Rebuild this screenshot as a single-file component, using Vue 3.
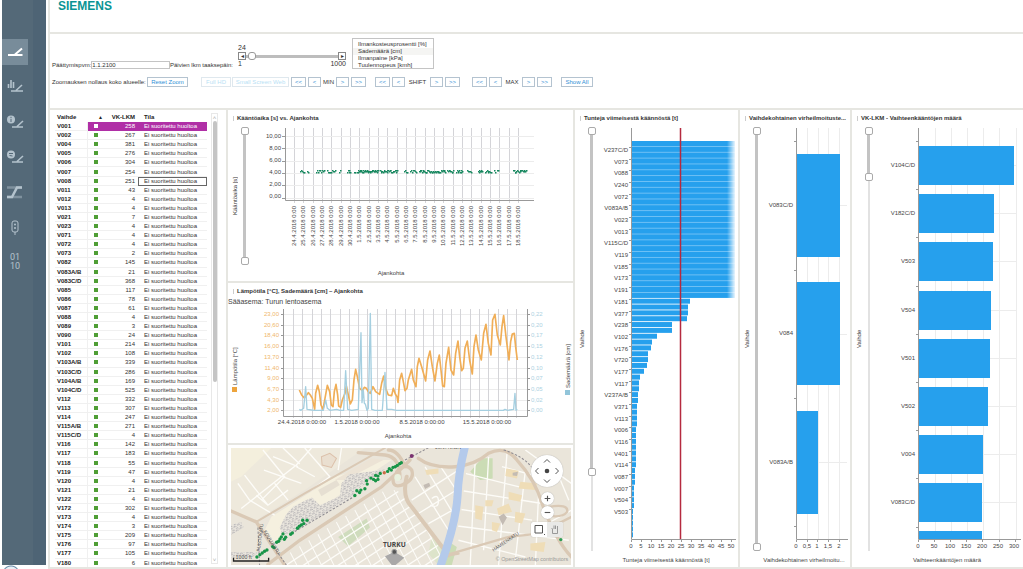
<script setup>
import { ref } from 'vue'

const rows = `V001 258|V002 267|V004 381|V005 276|V006 304|V007 254|V008 251|V011 43|V012 4|V013 4|V021 7|V023 4|V071 4|V072 4|V073 2|V082 145|V083A/B 21|V083C/D 368|V085 117|V086 78|V087 61|V088 4|V089 3|V090 24|V101 214|V102 108|V103A/B 339|V103C/D 286|V104A/B 169|V104C/D 525|V112 332|V113 307|V114 247|V115A/B 271|V115C/D 4|V116 142|V117 183|V118 55|V119 47|V120 4|V121 21|V122 4|V172 302|V173 4|V174 3|V175 209|V176 97|V177 105|V180 6`
  .split('|')
  .map((r) => {
    const [name, count] = r.split(' ')
    return { name, count }
  })

const endDate = ref('1.1.2100')
const days = ref(24)
const weather = ['Ilmankosteusprosentti [%]', 'Sademäärä [cm]', 'Ilmanpaine [kPa]', 'Tuulennopeus [kmh]']
const shifts = [
  { name: 'MIN', cls: 'min' },
  { name: 'SHIFT', cls: 'shift' },
  { name: 'MAX', cls: 'max' }
]

const dates = Array.from({ length: 25 }, (_, i) => (i < 7 ? `${24 + i}.4.2018 0:00` : `${i - 6}.5.2018 0:00`))
const turnTicks = ['10,00', '8,00', '6,00', '4,00', '2,00', '0,00']

let seed = 7
const rand = () => {
  seed = (seed * 1103515245 + 12345) % 2147483648
  return seed / 2147483648
}
const clusters = [[300, 304, 5], [307, 308, 2], [316, 324, 9], [327, 335, 9], [339, 340, 2], [347, 350, 5], [354, 355, 2], [357, 378, 34], [380, 397, 24], [404, 407, 4], [410, 416, 7], [419, 445, 36], [447, 453, 9], [456, 462, 9], [467, 471, 5], [478, 482, 7], [485, 491, 8], [494, 498, 4], [513, 526, 17]]
const dots = clusters.flatMap(([a, b, n]) =>
  Array.from({ length: n }, (_, i) => ({
    x: Math.round(a + ((b - a) * i) / (n - 1)),
    y: 171 + Math.round((rand() - 0.5) * 3)
  }))
)

const tempTicks = ['23,00', '20,60', '18,40', '16,00', '13,70', '11,40', '9,00', '6,70', '4,30', '2,00']
const rainTicks = ['0,22', '0,20', '0,17', '0,15', '0,12', '0,10', '0,07', '0,05', '0,02', '0,00']
const weekTicks = [
  { x: 302, t: '24.4.2018 0:00:00' },
  { x: 357, t: '1.5.2018 0:00:00' },
  { x: 422, t: '8.5.2018 0:00:00' },
  { x: 487, t: '15.5.2018 0:00:00' }
]
const tempLine = '223,330 230,345 238,354 250,338 256,345 262,355 269,388 272,340 278,316 283,335 288,375 294,388 300,355 307,316 314,335 319,375 324,380 328,335 333,313 338,345 341,378 347,382 352,360 360,340 364,318 370,345 376,372 382,360 387,300 392,268 397,290 404,325 412,332 418,322 424,325 430,335 436,340 444,320 452,335 464,343 470,310 476,288 482,325 490,345 500,347 505,325 511,342 516,350 519,367 524,300 530,280 536,310 540,332 546,325 550,300 560,268 565,300 573,320 577,260 582,235 590,260 602,303 608,240 615,213 622,260 630,303 637,250 643,225 648,270 653,318 658,320 663,250 671,202 678,270 686,285 692,220 699,183 704,230 710,272 715,265 720,205 727,183 734,240 742,282 747,200 753,165 760,210 769,240 776,160 783,133 790,190 798,225 803,120 810,103 817,165 826,195 831,140 836,107 843,170 852,240 857,185 862,162 868,160 872,200 877,240'
const rainLine = '223,388 228,391 236,385 242,320 246,388 260,390 270,391 295,391 302,360 307,385 315,391 335,388 345,391 356,391 362,272 368,388 380,391 400,388 408,158 411,368 415,330 418,370 421,372 426,391 430,385 436,100 440,388 450,391 472,391 480,277 486,388 500,388 515,391 560,391 835,391 840,388 848,391 866,388 870,340 873,391 877,388'

const hourLabels = 'V237C/D V073 V088 V240 V072 V083A/B V023 V013 V115C/D V119 V185 V173 V191 V181 V377 V238 V102 V176 V720 V177 V117 V237A/B V371 V113 V006 V116 V401 V114 V087 V007 V504 V503'.split(' ')
const hourBars = [
  ...Array(27).fill(103),
  58, 56, 56, 55, 40, 40, 25, 20, 19, 16, 16, 15, 12, 8, 7, 7, 6, 6, 5, 5, 5, 5, 4, 4, 4, 4, 4, 4, 4, 3, 3, 3, 2, 2, 2, 2, 1, 1, 1, 1, 1
]
const hourPitch = 5.84

const errorBars = [
  { name: 'V083C/D', y: 154, w: 43 },
  { name: 'V084', y: 282, w: 43 },
  { name: 'V083A/B', y: 411, w: 21 }
]
const errorTicks = ['0', '0,5', '1', '1,5', '2']

const countBars = [['V104C/D', 95], ['V182C/D', 75], ['V503', 74], ['V504', 72], ['V501', 71], ['V502', 69], ['V004', 64], ['V083C/D', 63]]
const countPitch = 48.2

const mapDots = [[97, 350], [106, 343], [113, 338], [120, 333], [127, 329], [144, 319], [148, 322], [156, 306], [162, 303], [166, 296], [170, 290], [175, 281], [179, 297], [183, 291], [198, 282], [203, 278], [218, 264], [224, 258], [230, 254], [234, 240], [237, 250], [247, 240], [390, 166], [396, 152], [404, 157], [408, 150], [420, 146], [425, 122], [427, 132], [438, 114], [446, 118], [452, 122], [459, 118], [459, 108], [452, 106], [466, 100], [488, 94], [493, 86], [499, 90], [504, 82], [511, 80], [517, 76], [524, 71], [529, 68]]
const range = (n) => Array.from({ length: n }, (_, i) => i)

const zoomSliders = {
  turn: { a: 0, b: 100 },
  hours: { a: 0, b: 82 },
  errors: { a: 0, b: 100 },
  counts: { a: 0, b: 11 }
}
</script>

<template>
  <div class="page">
    <nav class="side" aria-label="Päävalikko">
      <div class="rail">
        <a href="#" class="item active" aria-label="Vaihteet">
          <svg viewBox="0 0 26 26"><path d="M6 16H20.500M13 15.500L20 9.500" stroke-width="2" /></svg>
        </a>
        <a href="#" class="item" aria-label="Tilastot">
          <svg viewBox="0 0 26 26">
            <path d="M6.500 10V14M9 6V14M11.500 8V14" stroke-width="1.600" />
            <path d="M9 17H21M14 16.500L20 11" stroke-width="1.600" />
          </svg>
        </a>
        <a href="#" class="item" aria-label="Tiedot">
          <svg viewBox="0 0 26 26">
            <circle cx="9" cy="10.500" r="4" class="fill" />
            <path d="M9 9.800V13M9 7.800V9" class="dark" />
            <path d="M10 18H21M15 17.500L21 12" stroke-width="1.600" />
          </svg>
        </a>
        <a href="#" class="item" aria-label="Asetukset">
          <svg viewBox="0 0 26 26">
            <circle cx="9" cy="10.500" r="4" class="fill" />
            <path d="M7 9.500H11M7.500 11.500L10.500 12" class="dark" />
            <path d="M10 18H21M15 17.500L21 12" stroke-width="1.600" />
          </svg>
        </a>
        <a href="#" class="item" aria-label="Raiteet">
          <svg viewBox="0 0 26 26">
            <path d="M5 8.500H20M5 18H20" stroke-width="2.500" opacity=".45" />
            <path d="M5 18H10L15 8.500H20" stroke-width="2.500" />
          </svg>
        </a>
        <a href="#" class="item" aria-label="Opastimet">
          <svg viewBox="0 0 26 26">
            <rect x="10" y="7" width="6" height="11" rx="2" stroke-width="1" />
            <circle cx="13" cy="10.500" r="1" class="fill" /><circle cx="13" cy="14" r="1" class="fill" />
            <path d="M13 18V21" stroke-width="1" />
          </svg>
        </a>
        <a href="#" class="item digits" aria-label="Data">01<br />10</a>
      </div>
      <span class="orb"></span>
    </nav>

    <div class="main">
      <header class="brand"><span class="logo">SIEMENS</span></header>

      <section class="tools">
        <div class="line first">
          <label class="date">Päättymispvm:<input v-model="endDate" type="text" /></label>
          <label class="days" for="days">Päivien lkm taaksepäin:</label>
          <div class="stepper">
            <span>{{ days }}</span>
            <div class="track">
              <button type="button" aria-label="Vähennä">◂</button>
              <input id="days" v-model="days" type="range" min="1" max="1000" />
              <button type="button" aria-label="Lisää">▸</button>
            </div>
            <div class="ends"><span>1</span><span>1000</span></div>
          </div>
          <select class="weather" multiple size="4" aria-label="Sääsuure">
            <option v-for="w in weather" :key="w" :class="{ chosen: w === weather[1] }">{{ w }}</option>
          </select>
        </div>
        <div class="line second">
          <span class="zoom-label">Zoomauksen nollaus koko alueelle:</span>
          <button type="button" class="reset">Reset Zoom</button>
          <button type="button" class="hd" disabled>Full HD</button>
          <button type="button" class="small" disabled>Small Screen Web</button>
          <div v-for="s in shifts" :key="s.name" class="shifter" :class="s.cls">
            <button type="button" class="dbl">&lt;&lt;</button>
            <button type="button" class="sgl">&lt;</button>
            <span>{{ s.name }}</span>
            <button type="button" class="sgl">&gt;</button>
            <button type="button" class="dbl">&gt;&gt;</button>
          </div>
          <button type="button" class="all">Show All</button>
        </div>
      </section>

      <div class="board">
        <section class="panel list">
          <table>
            <colgroup><col class="c1" /><col class="c2" /><col class="c3" /><col /></colgroup>
            <thead>
              <tr><th>Vaihde</th><th class="sort">▲</th><th class="num">VK-LKM</th><th class="state">Tila</th></tr>
            </thead>
            <tbody>
              <tr v-for="(r, i) in rows" :key="r.name" :class="{ picked: i === 0, focused: i === 6 }">
                <th>{{ r.name }}</th>
                <td><i class="dot"></i></td>
                <td class="num">{{ r.count }}</td>
                <td class="state">Ei suoritettu huoltoa</td>
              </tr>
            </tbody>
          </table>
          <div class="scroll"><span class="cap">˄</span><span class="thumb"></span><span class="rest"></span><span class="cap">˅</span></div>
        </section>

        <section class="panel plot turn">
          <h2><i></i>Kääntöaika [s] vs. Ajankohta</h2>
          <span class="ylabel">Kääntöaika [s]</span>
          <div class="zoomer" :style="{ '--a': zoomSliders.turn.a + '%', '--b': zoomSliders.turn.b + '%' }">
            <input v-model="zoomSliders.turn.a" type="range" aria-label="Kääntöaika alku" />
            <input v-model="zoomSliders.turn.b" type="range" aria-label="Kääntöaika loppu" />
          </div>
          <svg viewBox="249 123 324 158">
            <g class="vgrid"><path v-for="i in range(25)" :key="i" :d="`M${Math.round(294 + (i * 28) / 3)}.5 128V203`" /></g>
            <g class="hgrid"><path v-for="i in range(6)" :key="i" :d="`M283 ${136 + Math.round(i * 12.3)}.5H534`" /></g>
            <path class="axis" d="M285.500 128V200.500H534" />
            <g class="ticks">
              <path v-for="i in range(6)" :key="i" :d="`M282 ${136 + Math.round(i * 12.3)}.5H285`" />
              <text v-for="(t, i) in turnTicks" :key="t" x="281" :y="138 + i * 12" text-anchor="end">{{ t }}</text>
              <text v-for="(d, i) in dates" :key="d" text-anchor="end" :transform="`translate(${Math.round(296 + (i * 28) / 3)} 206) rotate(-90)`">{{ d }}</text>
              <text x="391" y="275" text-anchor="middle">Ajankohta</text>
            </g>
            <rect v-for="(d, i) in dots" :key="i" :x="d.x" :y="d.y" width="1.500" height="1.500" fill="#16875f" />
          </svg>
        </section>

        <section class="panel plot weatherplot">
          <h2><i></i>Lämpötila [°C], Sademäärä [cm] – Ajankohta</h2>
          <svg viewBox="228 296 345 147">
            <text x="228" y="304" class="station">Sääasema: Turun lentoasema</text>
            <g class="hgrid"><path v-for="i in range(10)" :key="i" :d="`M284 ${Math.round(314 + i * 10.7)}.5H527`" /></g>
            <g class="vgrid"><path v-for="i in range(25)" :key="i" :d="`M${Math.round(293 + i * 9.3)}.5 309V418`" /></g>
            <path class="axis" d="M283.500 309V416.500H527.500V309" />
            <g v-for="(t, i) in tempTicks" :key="t">
              <path class="axis" :d="`M281 ${Math.round(314 + i * 10.7)}.5H283M528 ${Math.round(314 + i * 10.7)}.5H530`" />
              <text x="279" :y="Math.round(316 + i * 10.7)" text-anchor="end" fill="#efb66c">{{ t }}</text>
              <text x="531" :y="Math.round(316 + i * 10.7)" fill="#add2e2">{{ rainTicks[i] }}</text>
            </g>
            <g transform="translate(225 280) scale(.3333)" fill="none" stroke-width="4" stroke-linejoin="round">
              <polyline :points="tempLine" stroke="#f0ae57" stroke-width="5" />
              <polyline :points="rainLine" stroke="#a5cfe0" />
            </g>
            <text v-for="w in weekTicks" :key="w.t" :x="w.x" y="424" text-anchor="middle">{{ w.t }}</text>
            <text x="398" y="438" text-anchor="middle">Ajankohta</text>
            <rect x="232" y="387" width="5" height="5" fill="#eda43d" />
            <text transform="translate(237 385) rotate(-90)">Lämpötila [°C]</text>
            <rect x="565" y="390" width="5" height="5" fill="#92c5da" />
            <text transform="translate(570 388) rotate(-90)">Sademäärä [cm]</text>
          </svg>
        </section>

        <section class="panel map">
          <svg viewBox="18 24 1020 350" preserveAspectRatio="xMidYMid slice">
            <defs>
              <pattern id="yard" width="13" height="13" patternUnits="userSpaceOnUse" patternTransform="rotate(-32)">
                <rect width="13" height="13" fill="#e9e5dd" />
                <path d="M1 3q5 -3 9 1M6 10q4 -2 7 1" fill="none" stroke="#a3a2a8" stroke-width="2.500" />
              </pattern>
              <clipPath id="town"><path d="M140 374L480 150L530 130L545 190L660 345L650 374Z" /></clipPath>
              <clipPath id="mid"><path d="M545 120L600 72L700 85L685 230L655 330L545 180Z" /></clipPath>
              <clipPath id="east"><path d="M724 85L830 30L1038 30V374H660L705 240Z" /></clipPath>
            </defs>
            <rect x="18" y="24" width="1020" height="350" fill="#eae5da" />
            <path d="M18 24H420L240 150L110 230L95 245L18 212Z" fill="#eee9dc" />
            <path d="M18 24H140L50 110L18 125Z" fill="#f4efdd" />
            <path d="M140 230L330 110L400 90L440 60L500 60L350 160L180 280L150 310L120 270Z" fill="#f5f0df" />
            <path d="M330 120L440 55L475 60L360 120Z" fill="#ece3d5" />
            <path d="M290 50L315 40L335 55L320 82L292 75Z" fill="#eadfd0" stroke="#dcc1ab" stroke-width="3" />
            <path d="M280 150L335 120L345 135L290 168Z" fill="#e6dfd2" />
            <path d="M340 290L425 235L435 262L370 318Z" fill="#cfdcbd" />
            <path d="M770 55H802V115L765 120L735 95Z" fill="#cbdcb5" />
            <path d="M672 305L695 320L680 374H640Z" fill="#cbdcb5" />
            <path d="M620 290L655 330L640 374L610 340Z" fill="#dde4ca" />

            <g stroke="#fdfcf8" stroke-width="4" fill="none">
              <path d="M50 205L215 75L260 24M115 30L180 110L110 180M75 180L150 225M145 50L220 80M95 165L130 195M215 80L270 110M175 24L225 72M60 105L130 195L190 150M40 130L75 180M240 24L315 110L260 150M350 24L340 90M150 130L190 180M118 90L230 130" />
              <g clip-path="url(#town)">
                <path v-for="i in range(9)" :key="'a' + i" :d="`M${100 + i * 52} 430L${520 + i * 52} 154`" />
                <path v-for="i in range(17)" :key="'b' + i" :d="`M${100 + i * 37} ${150}L${240 + i * 37} 420`" stroke-width="3" />
              </g>
              <g clip-path="url(#mid)">
                <path d="M560 180L700 90M580 220L710 140M610 250L700 200M600 80L690 230M570 110L670 270M640 70L700 160M620 175q20 -15 20 8t-25 12" />
              </g>
              <g clip-path="url(#east)">
                <path d="M700 150L950 190M690 205L920 240M680 255L1030 300M720 100L900 145M750 60L735 374M790 50L775 330M845 40L820 374M900 90L870 360M940 150L930 374M980 60L1030 180M900 30L1038 130M985 60L940 130M1038 210L930 270M700 300L900 350M830 80L940 110" />
              </g>
            </g>
            <g fill="#efddb7">
              <path d="M843 85L880 92L875 115L840 108ZM885 125L935 130L930 150L880 145ZM850 155L890 165L885 185L850 178ZM815 205L850 190L860 215L820 225ZM870 215L900 220L890 250L868 245ZM750 195L775 200L770 240L750 235ZM800 245L825 250L815 275L800 270ZM915 310L960 305L955 335L915 330ZM780 180L805 180L800 198L780 198ZM600 90L640 85L640 100L605 105Z" />
            </g>
            <path d="M820 230L835 220L845 232L832 255ZM595 135L612 128L616 138L600 147ZM862 98L878 95L875 108L862 106Z" fill="#c3bbb3" />

            <g fill="none" stroke="#dac9b5" stroke-width="10" stroke-linecap="round">
              <path d="M130 372L225 300L470 140L530 85L555 60" />
              <path d="M18 212L95 245L180 374" />
              <path d="M95 245L240 160L480 24" stroke-width="6" />
              <path d="M545 110Q530 170 560 200L670 345" stroke-width="12" />
              <path d="M580 55Q620 85 690 80Q750 75 790 40Q840 15 875 60Q930 120 950 190Q990 300 1038 350" />
              <path d="M400 38L480 45Q525 50 525 115M490 30Q520 30 540 80M505 110Q500 145 530 135Q570 120 560 90Q540 65 515 95" />
              <path d="M660 345L850 290L940 280L1038 230M970 200Q1030 190 1025 215Q1010 235 960 225M670 345L700 340" stroke-width="7" />
            </g>
            <path d="M722 10Q700 90 697 170Q692 250 645 380" fill="none" stroke="#b4caeb" stroke-width="24" />
            <circle cx="518" cy="112" r="10" fill="#e8f1de" />

            <path d="M350 130L372 103L480 88L440 118L395 150L380 172L200 280L172 282L165 262L185 222L205 200L240 182L262 172L285 195L345 168Z" fill="url(#yard)" />
            <path d="M18 255L50 245L58 262L18 285ZM18 335L100 335L85 350L18 352Z" fill="url(#yard)" />
            <g fill="none" stroke="#8d8a90" stroke-width="3" stroke-dasharray="7 5">
              <path d="M540 60L620 18M835 30Q900 50 925 90M100 262L105 374M105 262L140 310L185 374M200 280L390 168" />
            </g>
            <circle v-for="(d, i) in mapDots" :key="i" :cx="d[0]" :cy="d[1]" r="5" fill="#189447" />
            <circle cx="478" cy="98" r="5" fill="#cb6b45" />
            <circle cx="560" cy="48" r="6" fill="#7b3270" />
            <circle cx="1006" cy="298" r="5" fill="#2f9c53" />

            <path d="M480 348L508 334L538 352L512 374H500Z" fill="#a9a8a8" />
            <circle cx="508" cy="335" r="7" fill="#555" stroke="#999" stroke-width="3" />
            <g class="streets">
              <text x="508" y="321" text-anchor="middle" class="city">TURKU</text>
              <text x="630" y="28">LÖNTTINEN</text>
              <text transform="translate(805 334) rotate(-34)">HÄMEENKATU</text>
              <text transform="translate(106 334) rotate(-83)">PUISTOKATU</text>
              <text transform="translate(116 274) rotate(58)">KOULUKATU</text>
              <text x="33" y="357" class="scale">1000 ft</text>
              <text x="1028" y="361" text-anchor="end" class="credit">© OpenStreetMap contributors</text>
            </g>
            <path d="M27 352V362H132V352" fill="none" stroke="#222" stroke-width="4" />
          </svg>
          <div class="mapctl">
            <div class="pan">
              <button type="button" class="n" aria-label="Pohjoinen"><svg viewBox="0 0 8 8"><path d="M1 5.500L4 2.500L7 5.500" /></svg></button>
              <button type="button" class="w" aria-label="Länsi"><svg viewBox="0 0 8 8"><path d="M5.500 1L2.500 4L5.500 7" /></svg></button>
              <button type="button" class="o" aria-label="Keskitä"><svg viewBox="0 0 8 8"><circle cx="4" cy="4" r="2.300" /></svg></button>
              <button type="button" class="e" aria-label="Itä"><svg viewBox="0 0 8 8"><path d="M2.500 1L5.500 4L2.500 7" /></svg></button>
              <button type="button" class="s" aria-label="Etelä"><svg viewBox="0 0 8 8"><path d="M1 2.500L4 5.500L7 2.500" /></svg></button>
            </div>
            <button type="button" class="round" aria-label="Lähennä"><svg viewBox="0 0 8 8"><path d="M1.500 4H6.500M4 1.500V6.500" /></svg></button>
            <button type="button" class="round" aria-label="Loitonna"><svg viewBox="0 0 8 8"><path d="M1.500 4H6.500" /></svg></button>
            <div class="modes">
              <button type="button" aria-label="Valinta"><svg viewBox="0 0 16 15"><path d="M4 3.500H11.500V11H4ZM13 12.500H14" /></svg></button>
              <button type="button" class="hand" aria-label="Siirto"><svg viewBox="0 0 16 15"><path d="M5.500 7V11.500H10.500V5.500M5.500 7L4.500 6M7 7V3.500M8.500 7V3.500M10.500 6V4" /></svg></button>
            </div>
          </div>
        </section>

        <section class="panel plot tall">
          <h2><i></i>Tunteja viimeisestä käännöstä [t]</h2>
          <span class="ylabel">Vaihde</span>
          <div class="zoomer" :style="{ '--a': zoomSliders.hours.a + '%', '--b': zoomSliders.hours.b + '%' }">
            <input v-model="zoomSliders.hours.a" type="range" aria-label="Tunnit alku" />
            <input v-model="zoomSliders.hours.b" type="range" aria-label="Tunnit loppu" />
          </div>
          <svg viewBox="596 123 142 444">
            <defs>
              <linearGradient id="fade"><stop offset="0" stop-color="#fff" stop-opacity="0" /><stop offset="1" stop-color="#fff" /></linearGradient>
            </defs>
            <rect x="632" y="141" width="103" height="157" fill="#7cc6f6" />
            <rect v-for="(w, i) in hourBars" :key="i" x="632" :y="141 + i * hourPitch" :width="w" height="5" fill="#26a0ed" />
            <rect x="727" y="140" width="9" height="159" fill="url(#fade)" />
            <path class="axis" d="M631.500 128V539.500H736" />
            <g v-for="(t, i) in hourLabels" :key="t">
              <path class="axis" :d="`M629 ${Math.round(147 + i * 11.68)}.5H631`" />
              <text x="628" :y="Math.round(152 + i * 11.68)" text-anchor="end">{{ t }}</text>
            </g>
            <path d="M680.500 128V539" stroke="#b52a3f" stroke-width="1.500" />
            <g v-for="i in range(11)" :key="i">
              <path class="axis" :d="`M${631 + i * 10}.5 540V542`" />
              <text :x="631 + i * 10" y="548" text-anchor="middle">{{ i * 5 }}</text>
            </g>
            <text x="666" y="562" text-anchor="middle">Tunteja viimeisestä käännöstä [t]</text>
          </svg>
        </section>

        <section class="panel plot tall">
          <h2><i></i>Vaihdekohtainen virheilmoituste...</h2>
          <span class="ylabel">Vaihde</span>
          <div class="zoomer" :style="{ '--a': zoomSliders.errors.a + '%', '--b': zoomSliders.errors.b + '%' }">
            <input v-model="zoomSliders.errors.a" type="range" aria-label="Virheet alku" />
            <input v-model="zoomSliders.errors.b" type="range" aria-label="Virheet loppu" />
          </div>
          <svg viewBox="761 123 89 444">
            <g class="hgrid">
              <path v-for="i in range(4)" :key="i" :d="`M${Math.round(807 + i * 10.7)}.5 128V539`" />
              <path d="M797 462.500H847M797 334.500H847M797 205.500H847" />
            </g>
            <g v-for="b in errorBars" :key="b.name">
              <rect x="797" :y="b.y" :width="b.w" height="103" fill="#26a0ed" />
              <text x="793" :y="b.y + 53" text-anchor="end">{{ b.name }}</text>
            </g>
            <path class="axis" d="M796.500 128V539.500H848M794 141.500H796M794 270.500H796M794 398.500H796M794 526.500H796" />
            <g v-for="(t, i) in errorTicks" :key="t">
              <path class="axis" :d="`M${Math.round(796 + i * 10.7)}.5 540V542`" />
              <text :x="Math.round(796 + i * 10.7)" y="548" text-anchor="middle">{{ t }}</text>
            </g>
            <text x="804" y="562" text-anchor="middle">Vaihdekohtainen virheilmoitu...</text>
          </svg>
        </section>

        <section class="panel plot tall">
          <h2><i></i>VK-LKM - Vaihteenkääntöjen määrä</h2>
          <span class="ylabel">Vaihde</span>
          <div class="zoomer" :style="{ '--a': zoomSliders.counts.a + '%', '--b': zoomSliders.counts.b + '%' }">
            <input v-model="zoomSliders.counts.a" type="range" aria-label="Määrä alku" />
            <input v-model="zoomSliders.counts.b" type="range" aria-label="Määrä loppu" />
          </div>
          <svg viewBox="873 123 150 444">
            <g class="hgrid">
              <path v-for="i in range(6)" :key="i" :d="`M${Math.round(935 + i * 16.1)}.5 128V539`" />
              <path v-for="i in range(8)" :key="'h' + i" :d="`M919 ${Math.round(165 + i * countPitch)}.5H1017`" />
            </g>
            <g v-for="(b, i) in countBars" :key="b[0]">
              <rect x="919" :y="Math.round(146 + i * countPitch)" :width="b[1]" height="39" fill="#26a0ed" />
              <text x="915" :y="Math.round(167 + i * countPitch)" text-anchor="end">{{ b[0] }}</text>
            </g>
            <rect x="919" y="531" width="63" height="8" fill="#26a0ed" />
            <path class="axis" d="M918.500 128V539.500H1021" />
            <path v-for="i in range(9)" :key="i" class="axis" :d="`M916 ${Math.round(141 + i * countPitch)}.5H918`" />
            <g v-for="i in range(7)" :key="i">
              <path class="axis" :d="`M${Math.round(918 + i * 16.1)}.5 540V542`" />
              <text :x="Math.round(918 + i * 16)" y="548" text-anchor="middle">{{ i * 50 }}</text>
            </g>
            <text x="947" y="562" text-anchor="middle">Vaihteenkääntöjen määrä</text>
          </svg>
        </section>
      </div>
    </div>
  </div>
</template>

<style>
body {
  margin: 0;
}
</style>

<style scoped>
.page {
  display: flex;
  height: 100vh;
  overflow: hidden;
  background: #fff;
  color: #333;
  font-family: "Liberation Sans", Arial, sans-serif;
  font-size: 6px;
  line-height: 8px;
}
.page * {
  box-sizing: border-box;
}
button,
input,
select {
  margin: 0;
  padding: 0;
  font: inherit;
  color: inherit;
}

.side {
  display: flex;
  flex-direction: column;
  flex: none;
  width: 48px;
  padding: 0 2px;
  overflow: hidden;
}
.rail {
  flex: 1;
  min-height: 0;
  padding-top: 39px;
  display: flex;
  flex-direction: column;
  gap: 9px;
  background: linear-gradient(to right, #546978 70%, #4e6475 70%);
}
.item {
  flex: none;
  width: 26px;
  height: 26px;
  color: #b4c3cd;
  text-decoration: none;
}
.item.active {
  background: #788c9a;
  color: #fff;
}
.item svg {
  display: block;
  width: 26px;
  height: 26px;
  fill: none;
  stroke: currentColor;
}
.item .fill {
  fill: currentColor;
  stroke: none;
}
.item .dark {
  stroke: #546978;
  stroke-width: 1;
}
.digits {
  padding-top: 4px;
  text-align: center;
  font: 9px/9px Roboto, "Liberation Sans", sans-serif;
}
.orb {
  flex: none;
  width: 100%;
  height: 4px;
  background: radial-gradient(circle at 9px 9px, #e8eff5 7px, #6789a6 8px, #fff 9px);
}

.main {
  flex: 1;
  min-width: 0;
  display: flex;
  flex-direction: column;
  gap: 2px;
  padding: 0 0 2px 2px;
  background: #e6e6e1;
}
.brand {
  flex: none;
  height: 32px;
  padding-left: 8px;
  background: #fff;
}
.logo {
  display: block;
  color: #0a9494;
  font-size: 12px;
  font-weight: bold;
  line-height: 12px;
}
.tools {
  flex: none;
  height: 74px;
  padding: 2px;
  background: #fff;
}
.line {
  display: flex;
  align-items: flex-end;
  white-space: nowrap;
}
.date {
  display: flex;
  width: 118px;
}
.date input {
  flex: 1;
  min-width: 0;
  height: 8px;
  border: 1px solid #c4c4c4;
  line-height: 6px;
}
.days {
  width: 68px;
}
.stepper {
  width: 108px;
  margin-bottom: 2px;
  font-size: 7px;
}
.stepper > span {
  display: block;
}
.track {
  display: flex;
  align-items: center;
}
.track button {
  width: 8px;
  height: 8px;
  border: 1px solid #888;
  background: #fff;
  color: #333;
  font-size: 6px;
  line-height: 6px;
}
.track input {
  flex: 1;
  min-width: 0;
  height: 8px;
  appearance: none;
  background: linear-gradient(#bdbdbd, #bdbdbd) center / 100% 3px no-repeat;
}
.track input::-webkit-slider-thumb {
  appearance: none;
  width: 8px;
  height: 8px;
  border: 1px solid #999;
  border-radius: 3px;
  background: #fff;
}
.ends {
  display: flex;
  justify-content: space-between;
  height: 7px;
}
.weather {
  width: 82px;
  height: 31px;
  margin-left: 6px;
  padding: 2px 0 0;
  border: 1px solid #c4c4c4;
  border-radius: 0;
  outline: 0;
  background: #fff;
  overflow: hidden;
  line-height: 7px;
}
.weather option {
  min-height: 0;
  height: 7px;
  padding: 0 0 0 5px;
  font-size: 6px;
  line-height: 7px;
}
.weather .chosen {
  background: #f5f5f3;
}
.first {
  height: 33px;
}
.second {
  height: 10px;
  margin-top: 8px;
  align-items: center;
}
.second button {
  flex: none;
  height: 10px;
  border: 1px solid #b4c3d0;
  background: #fff;
  color: #2f8fd6;
  line-height: 8px;
}
.second button:disabled {
  border-color: #dfe8ee;
  color: #b9dff5;
}
.zoom-label {
  width: 95px;
}
.reset {
  width: 41px;
  margin-right: 13px;
}
.hd {
  width: 30px;
}
.small {
  width: 57px;
  margin: 0 2px 0 1px;
}
.shifter {
  display: flex;
  gap: 2px;
  line-height: 10px;
}
.shifter span {
  width: 11px;
  text-align: center;
}
.shifter.shift {
  margin: 0 12px 0 9px;
}
.shifter.shift span {
  width: 21px;
}
.shifter.max span {
  width: 16px;
}
.dbl {
  width: 15px;
}
.sgl {
  width: 13px;
}
.all {
  width: 32px;
  margin-left: 9px;
}

.board {
  flex: 1;
  min-height: 0;
  display: grid;
  grid-template-columns: 176fr 345fr 163fr 110fr 171fr;
  grid-template-rows: 171fr 160fr 122fr;
  gap: 2px;
}
.panel {
  min-width: 0;
  min-height: 0;
  overflow: hidden;
  background: #fff;
}
.list,
.tall {
  grid-row: 1 / 4;
}
.list {
  display: flex;
  justify-content: space-between;
  align-items: flex-start;
  padding: 3px 8px 3px 5px;
}
.turn {
  grid-area: 1 / 2;
}
.weatherplot {
  grid-area: 2 / 2;
}
.map {
  grid-area: 3 / 2;
}

table {
  width: 152px;
  height: 455px;
  border-collapse: separate;
  border-spacing: 0;
  table-layout: fixed;
}
.c1 {
  width: 33px;
}
.c2 {
  width: 17px;
}
.c3 {
  width: 33px;
}
th,
td {
  padding: 0 0 0 2px;
  border-bottom: 1px solid #f0f0f0;
  text-align: left;
  white-space: nowrap;
  vertical-align: middle;
}
thead th {
  border-bottom-color: #fff;
}
th {
  color: #222;
}
tbody th {
  border-right: 1px solid #f0f0f0;
}
td.num,
th.num {
  padding: 0 3px 0 0;
  text-align: right;
}
td.state,
th.state {
  padding-left: 6px;
}
th.sort {
  padding-left: 10px;
  font-size: 5px;
}
.dot {
  display: block;
  width: 4px;
  height: 4px;
  margin-left: 4px;
  background: #4f9e35;
}
.picked td {
  border-color: #b02fa6;
  background: #b02fa6;
  color: #fff;
}
.picked .dot {
  background: #fff;
}
.focused .state {
  outline: 1px solid #666;
  outline-offset: -1px;
}
.scroll {
  display: flex;
  flex-direction: column;
  align-items: center;
  align-self: stretch;
  width: 7px;
  border: 1px solid #e8e8e8;
}
.cap {
  height: 7px;
  color: #aaa;
  line-height: 9px;
}
.thumb {
  flex: 60;
  width: 4px;
  border-radius: 2px;
  background: #c4c4c4;
}
.rest {
  flex: 40;
}

.plot {
  display: grid;
  grid-template-columns: 9px 9px minmax(0, 1fr);
  grid-template-rows: 13px minmax(0, 1fr);
  padding-left: 3px;
}
.weatherplot {
  grid-template-columns: minmax(0, 1fr);
  padding-left: 0;
}
.weatherplot h2 {
  padding-left: 5px;
}
h2 {
  grid-column: 1 / -1;
  display: flex;
  align-items: center;
  margin: 0;
  padding: 3px 0 0 2px;
  color: #333;
  font-size: 6px;
  font-weight: bold;
  line-height: 10px;
  white-space: nowrap;
}
h2 i {
  width: 1px;
  height: 5px;
  margin-right: 3px;
  background: #ccc;
}
.ylabel {
  margin: 4px 0 16px;
  writing-mode: vertical-rl;
  transform: rotate(180deg);
  text-align: center;
  line-height: 9px;
}
.zoomer {
  display: grid;
  min-height: 0;
  margin: 4px 0 16px;
  background:
    linear-gradient(to bottom, transparent var(--a), #c3c3c3 var(--a), #c3c3c3 var(--b), transparent var(--b)) center / 3px 100% no-repeat,
    linear-gradient(#e2e2e2, #e2e2e2) center / 2px 100% no-repeat;
}
.zoomer input {
  grid-area: 1 / 1;
  width: 9px;
  height: 100%;
  min-height: 0;
  appearance: none;
  background: none;
  writing-mode: vertical-lr;
  pointer-events: none;
}
.zoomer input::-webkit-slider-thumb {
  appearance: none;
  width: 8px;
  height: 8px;
  border: 1px solid #aaa;
  border-radius: 2px;
  background: #fff;
  pointer-events: auto;
}
.plot svg {
  display: block;
  width: 100%;
  height: 100%;
  min-height: 0;
}
.plot text {
  font-size: 6px;
  fill: #444;
}
.plot text[fill="#efb66c"] {
  fill: #efb66c;
}
.plot text[fill="#add2e2"] {
  fill: #add2e2;
}
.plot .station {
  font-size: 7px;
}
.axis,
.ticks path {
  fill: none;
  stroke: #999;
}
.vgrid {
  stroke: #d4d4d8;
}
.hgrid {
  stroke: #ececec;
}

.map {
  position: relative;
  padding: 3px 2px 2px 3px;
}
.map > svg {
  display: block;
  width: 100%;
  height: 100%;
}
.streets text {
  fill: #555;
  font-family: "Noto Sans", sans-serif;
  font-size: 14px;
}
.streets .city {
  fill: #444;
  font-size: 20px;
  font-weight: bold;
}
.streets .scale,
.streets .credit {
  font-family: "Liberation Sans", sans-serif;
  font-size: 16px;
}
.streets .credit {
  fill: #999;
}
.mapctl {
  position: absolute;
  top: 10px;
  right: 10px;
  display: flex;
  flex-direction: column;
  align-items: center;
  width: 32px;
}
.mapctl button {
  display: flex;
  border: 0;
  background: none;
}
.mapctl svg {
  width: 100%;
  height: 100%;
  fill: none;
  stroke: #555;
}
.pan {
  display: grid;
  grid-template-columns: repeat(3, 8px);
  grid-template-rows: repeat(3, 8px);
  gap: 2px;
  width: 32px;
  height: 32px;
  padding: 2px;
  border-radius: 50%;
  background: #fff;
  box-shadow: 0 0 1px #999;
  margin-bottom: 5px;
}
.n {
  grid-area: 1 / 2;
}
.w {
  grid-area: 2 / 1;
}
.o {
  grid-area: 2 / 2;
}
.e {
  grid-area: 2 / 3;
}
.s {
  grid-area: 3 / 2;
}
.pan .o svg {
  fill: #444;
  stroke: none;
}
.mapctl .round {
  width: 13px;
  height: 13px;
  margin-bottom: 1px;
  padding: 2px;
  border-radius: 50%;
  background: #fff;
  box-shadow: 0 0 1px #999;
}
.modes {
  display: flex;
  width: 32px;
  height: 15px;
  margin-top: 2px;
  border-radius: 2px;
  overflow: hidden;
  background: #fff;
  box-shadow: 0 0 1px #999;
}
.modes button {
  flex: 1;
}
.modes .hand {
  background: #e9e9e7;
}
.modes .hand svg {
  stroke: #999;
}
</style>
